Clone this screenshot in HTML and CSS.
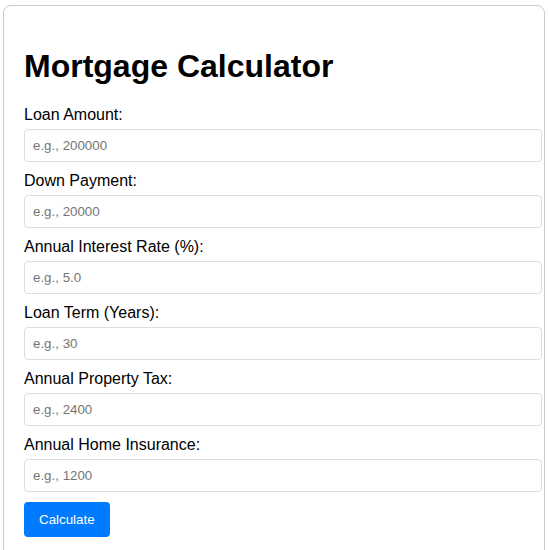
FILE: index.html
```html
<!DOCTYPE html>
<html>
<head>
<meta charset="utf-8">
<link rel="stylesheet" href="styles.css">
</head>
<body>
<div class="container">
  <h1 class="title">Mortgage Calculator</h1>
  <label class="label" for="loan">Loan Amount:</label>
  <input class="field" id="loan" type="number" placeholder="e.g., 200000">
  <label class="label" for="down">Down Payment:</label>
  <input class="field" id="down" type="number" placeholder="e.g., 20000">
  <label class="label" for="rate">Annual Interest Rate (%):</label>
  <input class="field" id="rate" type="number" placeholder="e.g., 5.0">
  <label class="label" for="term">Loan Term (Years):</label>
  <input class="field" id="term" type="number" placeholder="e.g., 30">
  <label class="label" for="tax">Annual Property Tax:</label>
  <input class="field" id="tax" type="number" placeholder="e.g., 2400">
  <label class="label" for="ins">Annual Home Insurance:</label>
  <input class="field" id="ins" type="number" placeholder="e.g., 1200">
  <button class="btn" type="button">Calculate</button>
</div>
</body>
</html>
```
FILE: styles.css
```css
html, body {
  margin: 0;
  padding: 0;
  background: #fff;
}
body {
  font-family: "Liberation Sans", Arial, sans-serif;
  color: #000;
}
.container {
  max-width: 500px;
  margin: 5px auto 0;
  padding: 20px;
  border: 1px solid #ccc;
  border-radius: 8px;
}
.title {
  font-size: 32px;
  font-weight: bold;
  margin: 22px 0 21px;
}
.label {
  display: block;
  font-size: 16px;
  margin-bottom: 5px;
}
.field {
  display: block;
  width: 100%;
  padding: 8px;
  margin: 0 0 10px;
  border: 1px solid #ddd;
  border-radius: 4px;
  font-family: "Liberation Sans", Arial, sans-serif;
  font-size: 13.33px;
  line-height: 15px;
  color: #000;
  background: #fff;
  outline: none;
}
.field::placeholder {
  color: #757575;
}
.field::-webkit-outer-spin-button,
.field::-webkit-inner-spin-button {
  -webkit-appearance: none;
  margin: 0;
}
.btn {
  display: block;
  padding: 10px 15px;
  border: none;
  border-radius: 4px;
  background: #007bff;
  color: #fff;
  font-family: "Liberation Sans", Arial, sans-serif;
  font-size: 13.33px;
  line-height: 15px;
  cursor: pointer;
}
```
